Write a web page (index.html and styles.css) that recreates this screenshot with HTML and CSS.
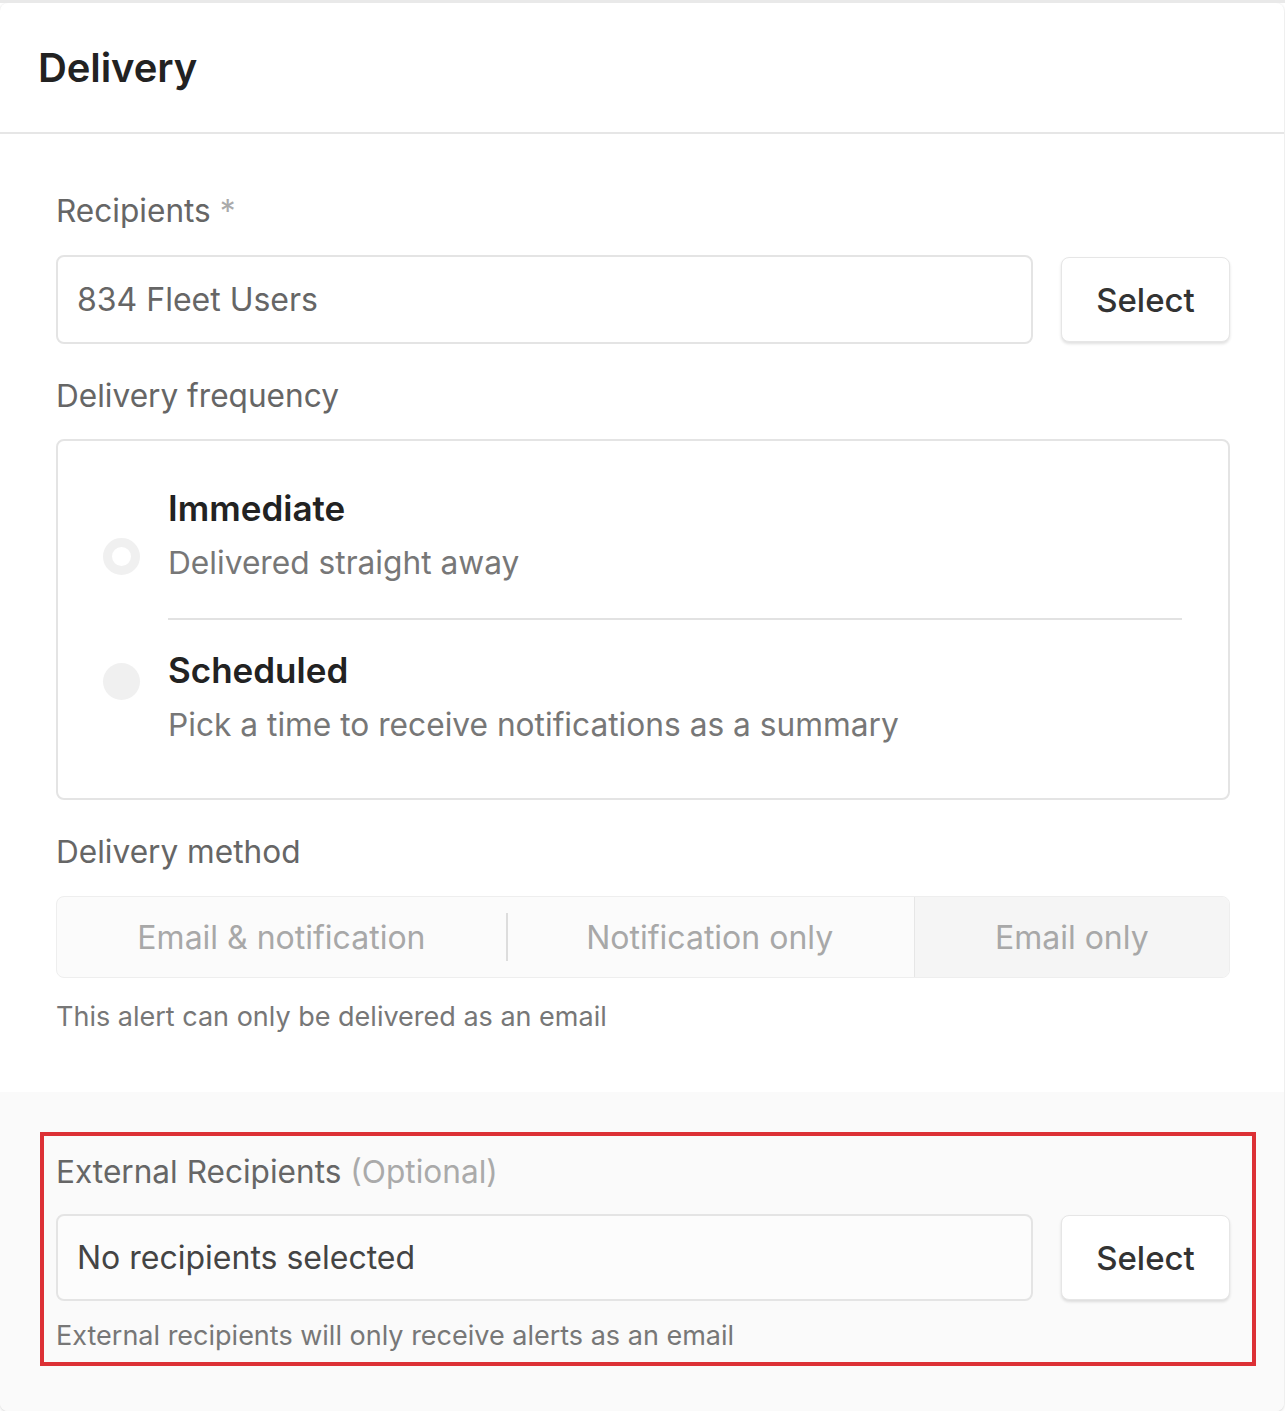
FILE: index.html
```html
<!DOCTYPE html>
<html lang="en">
<head>
  <meta charset="UTF-8">
  <meta name="viewport" content="width=device-width, initial-scale=1.0">
  <title>Delivery</title>
  <link rel="stylesheet" href="styles.css">
</head>
<body>
  <div class="card">
    <div class="card-header">
      <h1>Delivery</h1>
    </div>

    <div class="card-body">
      <label class="field-label">Recipients <span class="required">*</span></label>
      <div class="picker-row">
        <div class="picker-input muted">834 Fleet Users</div>
        <button class="select-btn">Select</button>
      </div>

      <label class="field-label spaced">Delivery frequency</label>
      <div class="frequency-box">
        <div class="option first">
          <span class="radio ring"></span>
          <div class="option-text">
            <div class="option-title">Immediate</div>
            <div class="option-desc">Delivered straight away</div>
          </div>
        </div>
        <div class="option second">
          <span class="radio filled"></span>
          <div class="option-text">
            <div class="option-title">Scheduled</div>
            <div class="option-desc">Pick a time to receive notifications as a summary</div>
          </div>
        </div>
      </div>

      <label class="field-label spaced">Delivery method</label>
      <div class="segmented">
        <div class="segment">Email &amp; notification</div>
        <div class="segment split">Notification only</div>
        <div class="segment active">Email only</div>
      </div>
      <p class="help">This alert can only be delivered as an email</p>
    </div>

    <div class="card-footer">
      <div class="highlight">
        <label class="field-label">External Recipients <span class="optional">(Optional)</span></label>
        <div class="picker-row ext">
          <div class="picker-input">No recipients selected</div>
          <button class="select-btn">Select</button>
        </div>
        <p class="help">External recipients will only receive alerts as an email</p>
      </div>
    </div>
  </div>
</body>
</html>
```

FILE: styles.css
```css
body {
  margin: 0;
  background: #fff;
  font-family: Inter, "Noto Sans", sans-serif;
  color: #333;
  border-top: 3px solid #e9e9e9;
}

.card {
  width: 1284px;
  background: #fff;
  border-radius: 8px;
  box-shadow: 0 1px 3px rgba(0, 0, 0, 0.18);
  overflow: hidden;
}

.card-header {
  height: 129px;
  display: flex;
  align-items: center;
  padding-left: 38px;
  border-bottom: 2px solid #e6e6e6;
}

.card-header h1 {
  margin: 0;
  font-size: 40px;
  font-weight: 600;
  color: #222;
  letter-spacing: -0.1px;
}

.card-body {
  padding: 55px 54px 57px 56px;
}

.field-label {
  display: block;
  font-size: 31.6px;
  line-height: 44px;
  color: #666;
}

.field-label.spaced {
  margin-top: 30px;
}

.required {
  color: #aaa;
}

.optional {
  color: #aaa;
}

.picker-row {
  display: flex;
  align-items: center;
  gap: 28px;
  margin-top: 22px;
}

.picker-input {
  flex: 1;
  height: 85px;
  border: 2px solid #e4e4e4;
  border-radius: 8px;
  box-sizing: content-box;
  display: flex;
  align-items: center;
  padding-left: 19px;
  font-size: 32px;
  color: #444;
  background: #fff;
}

.picker-input.muted {
  color: #666;
}

.select-btn {
  width: 169px;
  height: 85px;
  border: 1px solid #e6e6e6;
  border-radius: 8px;
  background: #fff;
  box-shadow: 0 2px 3px rgba(0, 0, 0, 0.12);
  font-family: inherit;
  font-size: 33px;
  font-weight: 500;
  color: #333;
  padding: 0;
}

.frequency-box {
  margin-top: 21px;
  border: 2px solid #e4e4e4;
  border-radius: 8px;
  padding: 43px 46px 51px 45px;
}

.option {
  display: flex;
  align-items: center;
  gap: 28px;
}

.radio {
  width: 37px;
  height: 37px;
  border-radius: 50%;
  box-sizing: border-box;
  flex-shrink: 0;
}

.radio.ring {
  border: 9px solid #f0f0f0;
  background: #fff;
}

.radio.filled {
  background: #f0f0f0;
}

.option-text {
  flex: 1;
}

.option.first .option-text {
  padding-bottom: 33px;
  border-bottom: 2px solid #e2e2e2;
}

.option.second .option-text {
  padding-top: 26px;
}

.option.first .radio {
  margin-top: 8px;
}

.option.second .radio {
  margin-top: -4px;
}

.option-title {
  font-size: 35px;
  line-height: 48px;
  font-weight: 600;
  color: #222;
}

.option-desc {
  margin-top: 9px;
  font-size: 31.7px;
  line-height: 44px;
  color: #777;
}

.segmented {
  margin-top: 22px;
  display: flex;
  height: 80px;
  border: 1px solid #eee;
  border-radius: 8px;
  background: #fbfbfb;
  overflow: hidden;
}

.segment {
  flex: 1 1 auto;
  display: flex;
  align-items: center;
  justify-content: center;
  font-size: 32px;
  color: #a8a8a8;
  position: relative;
}

.segment.split::before {
  content: "";
  position: absolute;
  left: 0;
  top: 16px;
  bottom: 16px;
  width: 2px;
  background: #ddd;
}

.segment.active {
  background: #f5f5f5;
  border-left: 1px solid #e6e6e6;
}

.help {
  margin: 21px 0 0;
  font-size: 27px;
  line-height: 36px;
  color: #777;
}

.card-footer {
  background: #fafafa;
  padding: 40px 28px 45px 40px;
}

.highlight {
  border: 4px solid #dc3035;
  padding: 14px 22px 8px 12px;
}

.picker-row.ext {
  margin-top: 20px;
}

.picker-row.ext .picker-input {
  background: #fcfcfc;
  height: 83px;
}

.highlight .help {
  margin-top: 17px;
}
```
